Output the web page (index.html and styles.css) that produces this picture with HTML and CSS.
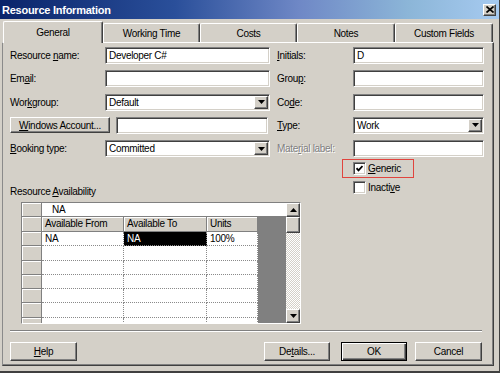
FILE: index.html
```html
<!doctype html>
<html>
  <head>
    <title>Resource Information</title>
    <meta name="viewport" content="width=device-width, initial-scale=1">
    <link rel="stylesheet" href="styles.css">
  </head>
  <body>
    <div class="dialog">
      <div class="titlebar">
        <span class="title">Resource Information</span>
        <span class="btn close">
          <svg width="8" height="7" viewBox="0 0 8 7"><path d="M0.5 0.5l7 6M7.5 0.5l-7 6" stroke="#000" stroke-width="1.7"/></svg>
        </span>
      </div>

      <div class="tabs">
        <div class="tab active tab-general">General</div>
        <div class="tab tab-working">Working Time</div>
        <div class="tab tab-costs">Costs</div>
        <div class="tab tab-notes">Notes</div>
        <div class="tab tab-custom">Custom Fields</div>
      </div>

      <div class="panel">
        <div class="form">
          <label class="lbl">Resource <u>n</u>ame:</label>
          <div class="field">Developer C#</div>
          <label class="lbl rl"><u>I</u>nitials:</label>
          <div class="field">D</div>

          <label class="lbl">Em<u>a</u>il:</label>
          <div class="field"></div>
          <label class="lbl rl">Grou<u>p</u>:</label>
          <div class="field"></div>

          <label class="lbl">Wor<u>k</u>group:</label>
          <div class="field combo"><span>Default</span><span class="btn arrow"><svg width="7" height="4"><path d="M0 0h7L3.5 4z"/></svg></span></div>
          <label class="lbl rl">Co<u>d</u>e:</label>
          <div class="field"></div>

          <div class="acct">
            <span class="btn acct-btn"><u>W</u>indows Account...</span>
            <div class="field acct-field"></div>
          </div>
          <label class="lbl rl"><u>T</u>ype:</label>
          <div class="field combo"><span>Work</span><span class="btn arrow"><svg width="7" height="4"><path d="M0 0h7L3.5 4z"/></svg></span></div>

          <label class="lbl"><u>B</u>ooking type:</label>
          <div class="field combo"><span>Committed</span><span class="btn arrow"><svg width="7" height="4"><path d="M0 0h7L3.5 4z"/></svg></span></div>
          <label class="lbl rl disabled">Mate<u>r</u>ial label:</label>
          <div class="field"></div>
        </div>

        <div class="lower">
          <div class="generic">
            <span class="check"><svg width="7" height="7" viewBox="0 0 7 7"><path d="M0.5 3.2l2 2.2 4-4.4" fill="none" stroke="#000" stroke-width="1.8"/></svg></span>
            <span><u>G</u>eneric</span>
          </div>
          <div class="avail-label">Resource <u>A</u>vailability</div>
          <div class="inactive">
            <span class="check"></span>
            <span>Inacti<u>v</u>e</span>
          </div>
        </div>

        <div class="table">
          <div class="sheet">
            <div class="editbar">
              <div class="hd"></div>
              <div class="editcell">NA</div>
            </div>
            <div class="cells">
              <div class="hd"></div>
              <div class="hd txt">Available From</div>
              <div class="hd txt">Available To</div>
              <div class="hd txt">Units</div>
              <div class="dark"></div>

              <div class="hd"></div><div class="c">NA</div><div class="c sel">NA</div><div class="c">100%</div>
              <div class="hd"></div><div class="c"></div><div class="c"></div><div class="c"></div>
              <div class="hd"></div><div class="c"></div><div class="c"></div><div class="c"></div>
              <div class="hd"></div><div class="c"></div><div class="c"></div><div class="c"></div>
              <div class="hd"></div><div class="c"></div><div class="c"></div><div class="c"></div>
              <div class="hd"></div><div class="c"></div><div class="c"></div><div class="c"></div>
              <div class="hd"></div><div class="c"></div><div class="c"></div><div class="c"></div>
            </div>
          </div>
          <div class="vscroll">
            <span class="btn sbtn"><svg width="7" height="4"><path d="M0 4h7L3.5 0z"/></svg></span>
            <span class="btn thumb"></span>
            <span class="track"></span>
            <span class="btn sbtn"><svg width="7" height="4"><path d="M0 0h7L3.5 4z"/></svg></span>
          </div>
        </div>

        <div class="sep"></div>

        <div class="buttons">
          <span class="btn b-help"><u>H</u>elp</span>
          <span class="btn b-details">De<u>t</u>ails...</span>
          <span class="btn b-ok">OK</span>
          <span class="btn b-cancel">Cancel</span>
        </div>
      </div>
    </div>
  </body>
</html>
```

FILE: styles.css
```css
* {
    box-sizing: border-box;
}
body {
    margin: 0;
    font-family: "Liberation Sans", Arial, sans-serif;
    font-size: 10px;
    letter-spacing: -0.3px;
    color: #000;
    background: #d4d0c8;
}
u {
    text-decoration-thickness: 1px;
    text-underline-offset: 1px;
}

.dialog {
    width: 500px;
    height: 373px;
    background: #d4d0c8;
    border-right: 1px solid #404040;
    border-bottom: 2px solid #404040;
    display: flex;
    flex-direction: column;
}

/* Title bar */
.titlebar {
    height: 19px;
    display: flex;
    align-items: center;
    justify-content: space-between;
    padding: 0 2px 0 2px;
    background: linear-gradient(to right, #0a246a 0%, #2a4f9a 35%, #6f88c6 60%, #8cb6d8 82%, #a6caf0 100%);
}
.title {
    color: #fff;
    font-weight: bold;
    font-size: 11px;
    letter-spacing: -0.25px;
}
.btn {
    background: #d4d0c8;
    border: 1px solid;
    border-color: #fff #404040 #404040 #fff;
    box-shadow: inset -1px -1px #808080;
    display: flex;
    align-items: center;
    justify-content: center;
    white-space: nowrap;
}
.close {
    width: 13px;
    height: 12px;
    margin-right: 1px;
}

/* Tabs */
.tabs {
    display: flex;
    align-items: flex-end;
    height: 21px;
    margin: 2px 0 0 3px;
}
.tab {
    height: 19px;
    border-top: 1px solid #fff;
    border-left: 1px solid #fff;
    border-right: 1px solid #404040;
    box-shadow: inset -1px 0 #808080;
    border-radius: 2px 2px 0 0;
    display: flex;
    align-items: center;
    justify-content: center;
    background: #d4d0c8;
}
.tab.active {
    height: 22px;
    margin-bottom: -1px;
    position: relative;
    z-index: 1;
}
.tab-general { width: 100px; }
.tab-working { width: 97px; }
.tab-costs { width: 97px; }
.tab-notes { width: 98px; }
.tab-custom { width: 98px; }

/* Panel */
.panel {
    margin-left: 2px;
    width: 492px;
    height: 324px;
    border-top: 1px solid #fff;
    border-left: 1px solid #8a8a8a;
    border-right: 1px solid #404040;
    border-bottom: 1px solid #404040;
    box-shadow: inset -1px -1px #808080;
    padding: 4px 0 0 7px;
}

.form {
    display: grid;
    grid-template-columns: 95px 165px 83px 131px;
    grid-auto-rows: 17px;
    row-gap: 6.25px;
}
.lbl {
    line-height: 17px;
    white-space: nowrap;
}
.rl {
    padding-left: 7px;
}
.disabled {
    color: #808080;
    text-shadow: 1px 1px #fff;
}
.field {
    background: #fff;
    border: 1px solid;
    border-color: #808080 #fff #fff #808080;
    box-shadow: inset 1px 1px #404040, inset -1px -1px #d4d0c8;
    padding: 0 2px 0 3px;
    display: flex;
    align-items: center;
}
.combo {
    padding-right: 1px;
}
.combo span:first-child {
    flex: 1;
}
.arrow {
    width: 14px;
    height: 13px;
}
.acct {
    grid-column: 1 / 3;
    display: flex;
    align-items: center;
    gap: 6px;
}
.acct-btn {
    width: 100px;
    height: 16px;
}
.acct-field {
    width: 152px;
    height: 17px;
}

/* Checkboxes and availability caption */
.lower {
    display: grid;
    grid-template-columns: 332px auto;
    margin-top: 2px;
}
.generic {
    grid-column: 2;
    width: 72px;
    height: 19px;
    border: 1px solid #e0443e;
    padding-left: 10px;
    display: flex;
    align-items: center;
    gap: 2px;
}
.check {
    width: 13px;
    height: 13px;
    background: #fff;
    border: 1px solid;
    border-color: #808080 #fff #fff #808080;
    box-shadow: inset 1px 1px #404040, inset -1px -1px #d4d0c8;
    display: flex;
    align-items: center;
    justify-content: center;
}
.inactive {
    grid-column: 2;
    grid-row: 2;
    align-self: start;
    display: flex;
    align-items: center;
    gap: 2px;
    margin: 3px 0 0 11px;
    height: 13px;
}
.avail-label {
    grid-column: 1;
    grid-row: 2;
    padding-top: 8px;
    line-height: 12px;
}

/* Availability table */
.table {
    margin: 4px 0 0 11px;
    width: 280px;
    height: 122px;
    display: flex;
    border: 1px solid;
    border-color: #808080 #fff #fff #808080;
    background: #fff;
}
.sheet {
    width: 264px;
    overflow: hidden;
}
.editbar {
    display: flex;
    height: 14px;
}
.editbar .hd {
    width: 20px;
}
.editcell {
    flex: 1;
    padding-left: 10px;
    line-height: 13px;
    border-bottom: 1px solid #808080;
}
.cells {
    display: grid;
    grid-template-columns: 20px 82px 83px 51px 28px;
    grid-template-rows: 15px;
    grid-auto-rows: 14.3px;
}
.hd {
    background: #d4d0c8;
    border-right: 1px solid #808080;
    border-bottom: 1px solid #808080;
    box-shadow: inset 1px 1px #fff;
}
.txt {
    padding-left: 3px;
    line-height: 14px;
    white-space: nowrap;
}
.dark {
    grid-column: 5;
    grid-row: 1 / 9;
    background: #808080;
}
.c {
    border-right: 1px dotted #8a8a8a;
    border-bottom: 1px dotted #8a8a8a;
    padding-left: 3px;
    line-height: 13px;
}
.sel {
    background: #000;
    color: #fff;
}
.vscroll {
    width: 14px;
    display: flex;
    flex-direction: column;
}
.sbtn {
    height: 14px;
}
.thumb {
    height: 16px;
}
.track {
    flex: 1;
    background: repeating-conic-gradient(#fff 0 25%, #d4d0c8 0 50%) 0 0 / 2px 2px;
}

/* Bottom */
.sep {
    margin-top: 6px;
    width: 472px;
    border-top: 1px solid #808080;
    border-bottom: 1px solid #fff;
}
.buttons {
    display: flex;
    width: 472px;
    height: 19px;
    margin-top: 10px;
}
.b-help { width: 67px; }
.b-details {
    width: 66px;
    margin-left: auto;
}
.b-ok {
    width: 66px;
    margin-left: 11px;
    border-color: #000;
    box-shadow: inset 1px 1px #fff, inset -1px -1px #404040, inset -2px -2px #808080;
}
.b-cancel {
    width: 67px;
    margin-left: 8px;
}
```
